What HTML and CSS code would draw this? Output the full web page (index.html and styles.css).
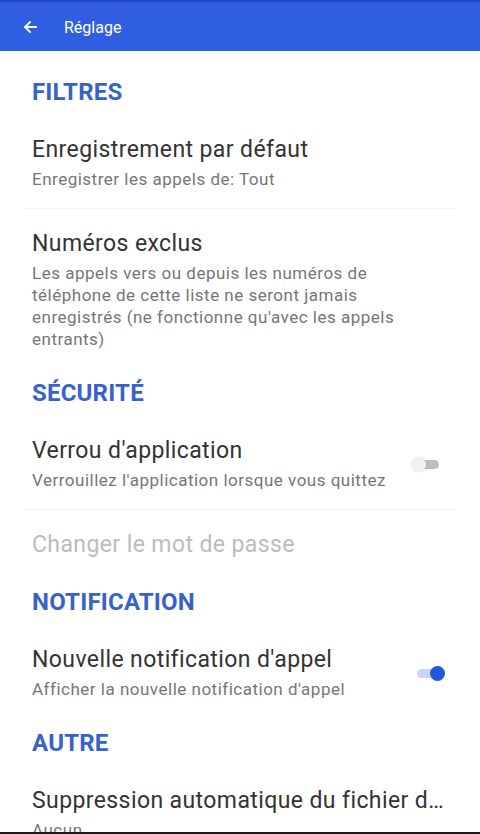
FILE: index.html
```html
<!DOCTYPE html>
<html lang="fr">
<head>
<meta charset="utf-8">
<title>Réglage</title>
<link rel="stylesheet" href="styles.css">
</head>
<body>
<div class="screen">
  <header class="appbar">
    <svg class="back" width="16" height="16" viewBox="0 0 16 16" aria-hidden="true">
      <path d="M14 8H3M8 3L3 8l5 5" fill="none" stroke="#ffffff" stroke-width="1.8" stroke-linecap="square"/>
    </svg>
    <span class="appbar-title">Réglage</span>
  </header>
  <main class="list">
    <h2 class="section first">FILTRES</h2>
    <div class="item divided">
      <div class="text">
        <div class="title">Enregistrement par défaut</div>
        <div class="sub">Enregistrer les appels de: Tout</div>
      </div>
    </div>
    <div class="item">
      <div class="text">
        <div class="title">Numéros exclus</div>
        <div class="sub long">Les appels vers ou depuis les numéros de téléphone de cette liste ne seront jamais enregistrés (ne fonctionne qu'avec les appels entrants)</div>
      </div>
    </div>

    <h2 class="section">SÉCURITÉ</h2>
    <div class="item divided">
      <div class="text">
        <div class="title">Verrou d'application</div>
        <div class="sub">Verrouillez l'application lorsque vous quittez</div>
      </div>
      <span class="switch off"><span class="track"></span><span class="thumb"></span></span>
    </div>
    <div class="item">
      <div class="text">
        <div class="title disabled">Changer le mot de passe</div>
      </div>
    </div>

    <h2 class="section">NOTIFICATION</h2>
    <div class="item">
      <div class="text">
        <div class="title">Nouvelle notification d'appel</div>
        <div class="sub">Afficher la nouvelle notification d'appel</div>
      </div>
      <span class="switch on"><span class="track"></span><span class="thumb"></span></span>
    </div>

    <h2 class="section">AUTRE</h2>
    <div class="item">
      <div class="text">
        <div class="title ellipsis">Suppression automatique du fichier d'enregistrement</div>
        <div class="sub">Aucun</div>
      </div>
    </div>
  </main>
</div>
</body>
</html>
```
FILE: styles.css
```css
* { box-sizing: border-box; }
html, body {
  margin: 0;
  padding: 0;
  background: #ffffff;
}
body {
  font-family: Roboto, "Noto Sans", "Liberation Sans", sans-serif;
  width: 480px;
  height: 834px;
  overflow: hidden;
}
.screen {
  height: 834px;
  border-bottom: 2px solid #1a1a1a;
  overflow: hidden;
}
.appbar {
  height: 51px;
  background: #2f5fe0;
  border-top: 2px solid #2448c2;
  display: flex;
  align-items: center;
  padding-left: 22px;
}
.back { flex: none; }
.appbar-title {
  margin-left: 26px;
  color: #ffffff;
  font-size: 16px;
  font-weight: 400;
  padding-top: 1px;
}
.list {
  padding-top: 16px;
}
.section {
  margin: 0;
  padding: 11px 32px 9px;
  font-size: 24px;
  line-height: 28px;
  letter-spacing: 0.2px;
  font-weight: 700;
  color: #3862cb;
}
.item {
  display: flex;
  align-items: center;
  margin: 0 24px;
  padding: 21px 0 18px 8px;
}
.item.divided {
  border-bottom: 1px solid #f0f0f0;
}
.text {
  flex: 1;
  min-width: 0;
}
.title {
  font-size: 23px;
  line-height: 28px;
  letter-spacing: 0.4px;
  color: #333333;
}
.title.disabled { color: #bcbcbc; }
.title.ellipsis {
  white-space: nowrap;
  overflow: hidden;
  text-overflow: ellipsis;
  padding-right: 12px;
}
.sub {
  margin-top: 4px;
  font-size: 17px;
  line-height: 22px;
  letter-spacing: 0.5px;
  color: #767676;
}
.sub.long {
  padding-right: 36px;
}
.switch {
  position: relative;
  flex: none;
  width: 34px;
  height: 16px;
  margin-left: 16px;
  margin-right: 11px;
}
.switch .track {
  position: absolute;
  left: 6px;
  right: 6px;
  top: 4px;
  height: 9px;
  border-radius: 5px;
}
.switch .thumb {
  position: absolute;
  top: 1px;
  width: 15px;
  height: 15px;
  border-radius: 50%;
}
.switch.off .track { background: #bdbdbd; }
.switch.off .thumb {
  left: 0;
  background: #f1f1f1;
  box-shadow: 0 0 2px rgba(0,0,0,0.12);
}
.switch.on .track { background: #c8d5f6; }
.switch.on .thumb {
  right: 0;
  background: #2456dc;
}
```
